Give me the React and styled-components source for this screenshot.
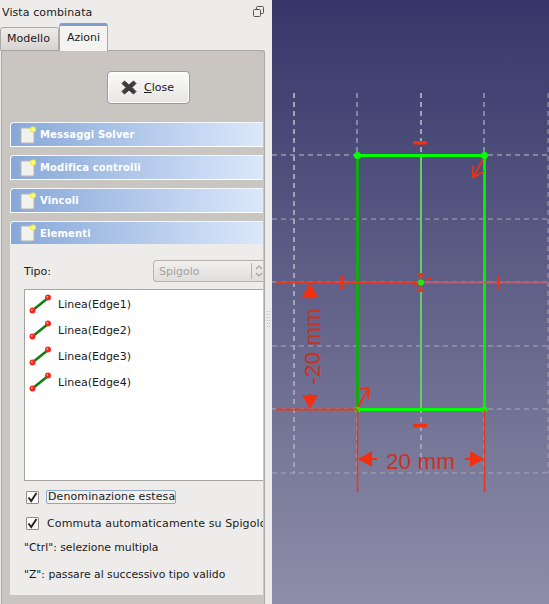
import styled, { createGlobalStyle } from "styled-components";

const GlobalStyle = createGlobalStyle`
  html, body {
    margin: 0;
    padding: 0;
    width: 549px;
    height: 604px;
    overflow: hidden;
    background: #edecea;
  }
  * {
    box-sizing: border-box;
  }
`;

const RED = "#f0300f";
const GRID_X = [294, 357, 421, 484, 548];
const GRID_Y = [155, 219, 282, 346, 409, 473];
const EDGES = ["Linea(Edge1)", "Linea(Edge2)", "Linea(Edge3)", "Linea(Edge4)"];
const SECTIONS = ["Messaggi Solver", "Modifica controlli", "Vincoli"];

function PanelIcon() {
  return (
    <svg width="16" height="18" viewBox="0 0 16 18">
      <rect x="1" y="2" width="13" height="15" rx="1" fill="#f2f1ec" stroke="#b9b8b2" />
      <circle cx="13" cy="3.5" r="3" fill="#f6f03a" />
      <circle cx="13" cy="3.5" r="1.5" fill="#fdfca0" />
    </svg>
  );
}

function EdgeIcon() {
  return (
    <svg width="22" height="20" viewBox="0 0 22 20">
      <line x1="4" y1="16" x2="19" y2="4" stroke="#0f7f0f" strokeWidth="2.6" />
      <circle cx="3.5" cy="16.5" r="3" fill="#ee2a22" />
      <circle cx="19" cy="3.5" r="3" fill="#ee2a22" />
      <circle cx="18.3" cy="2.8" r="0.9" fill="#ffb0a0" />
      <circle cx="2.8" cy="15.8" r="0.9" fill="#ffb0a0" />
    </svg>
  );
}

function Check() {
  return (
    <svg width="13" height="13" viewBox="0 0 13 13">
      <path d="M2.5 6.5 L5.2 10 L10.5 2" fill="none" stroke="#222" strokeWidth="1.9" />
    </svg>
  );
}

// the sketch is a drawing, coordinates are page x minus 272
function Sketch() {
  const ox = 272;
  return (
    <svg width="277" height="604" viewBox={`${ox} 0 277 604`}>
      <defs>
        <linearGradient id="sky" x1="0" y1="0" x2="0" y2="1">
          <stop offset="0" stopColor="#36366a" />
          <stop offset="1" stopColor="#8e8ea9" />
        </linearGradient>
      </defs>
      <rect x={ox} y="0" width="277" height="604" fill="url(#sky)" />

      {GRID_X.map((x) => (
        <line key={x} x1={x} y1="93" x2={x} y2="473" stroke={x === 357 || x === 484 ? "#c8c8d2" : "#a3a3b6"} strokeWidth={x === 294 || x === 421 ? 2 : 1} strokeDasharray="5 4" />
      ))}
      {GRID_Y.map((y) => (
        <line key={y} x1={ox} y1={y} x2="549" y2={y} stroke={y === 155 ? "#c0c0cc" : "#a8a8b8"} strokeWidth="1" strokeDasharray="5 4" />
      ))}

      <line x1="421" y1="155" x2="421" y2="409" stroke="#66cc66" strokeWidth="2" />
      <line x1="357.5" y1="155" x2="357.5" y2="409" stroke="#14a814" strokeWidth="3" />
      <line x1="484.5" y1="155" x2="484.5" y2="409" stroke="#00f000" strokeWidth="3" />
      <line x1="357" y1="155.5" x2="485" y2="155.5" stroke="#00ff00" strokeWidth="3" />
      <line x1="357" y1="409.5" x2="485" y2="409.5" stroke="#00ff00" strokeWidth="3" />

      <line x1="276" y1="282.5" x2="421" y2="282.5" stroke="#e53a1e" strokeWidth="2" />
      <line x1="421" y1="282.5" x2="548" y2="282.5" stroke="#b8616f" strokeWidth="2" />
      <rect x="340.5" y="276" width="3" height="14" fill={RED} />
      <rect x="497" y="276" width="3" height="14" fill={RED} />
      <rect x="413" y="141" width="14" height="3.5" fill={RED} />
      <rect x="413" y="424" width="14" height="3.5" fill={RED} />

      <circle cx="357.5" cy="155.5" r="3.5" fill="#00ff00" />
      <circle cx="484.5" cy="155.5" r="3.5" fill="#00ff00" />
      <circle cx="357.5" cy="409.5" r="3" fill="#00ff00" />
      <circle cx="484.5" cy="409.5" r="3" fill="#00ff00" />

      <g stroke={RED} strokeWidth="1.8" fill="none">
        <path d="M483 159 L473 178 M473 178 L473 165 M473 178 L484 171" />
        <path d="M358 407 L369 388 M369 388 L360 389 M369 388 L368 399" />
        <path d="M421 275 L421 291 M417 274 L424 274 M417 291 L424 291 M413 286 L418 284 M425 280 L431 278" />
      </g>
      <circle cx="421" cy="282.5" r="3" fill="#00ff00" />
      <circle cx="421" cy="282.5" r="1.2" fill="#9a9a50" />

      <line x1="276" y1="409.5" x2="357" y2="409.5" stroke="#e53a1e" strokeWidth="2" />
      <line x1="357.5" y1="410" x2="357.5" y2="492" stroke="#e53a1e" strokeWidth="1.6" />
      <line x1="484.5" y1="410" x2="484.5" y2="492" stroke="#e53a1e" strokeWidth="1.6" />

      <path d="M310 283 L318 297 L311 297 L311 299 L309 299 L309 297 L302 297 Z" fill={RED} />
      <path d="M310 409 L318 395 L311 395 L311 393 L309 393 L309 395 L302 395 Z" fill={RED} />
      <path d="M358 459 L372 451 L372 458 L377 458 L377 460 L372 460 L372 467 Z" fill={RED} />
      <path d="M484 459 L470 451 L470 458 L465 458 L465 460 L470 460 L470 467 Z" fill={RED} />

      <DimLabel x="420.5" y="469" textAnchor="middle">20 mm</DimLabel>
      <DimLabel x="0" y="0" textAnchor="middle" transform="translate(320 346.5) rotate(-90)">-20 mm</DimLabel>
    </svg>
  );
}

export default function App() {
  return (
    <Page>
      <GlobalStyle />
      <Dock>
        <Main>
          <TitleRow>
            <Title>Vista combinata</Title>
            <FloatButton>
              <svg width="11" height="11" viewBox="0 0 11 11" fill="none" stroke="#555" strokeWidth="1">
                <rect x="3.5" y="0.5" width="7" height="7" rx="1" />
                <rect x="0.5" y="3.5" width="7" height="7" rx="1" fill="#edecea" />
              </svg>
            </FloatButton>
          </TitleRow>
          <TabBar>
            <Tab>Modello</Tab>
            <Tab $active>Azioni</Tab>
          </TabBar>
          <Frame>
            <CloseRow>
              <CloseButton>
                <svg width="16" height="15" viewBox="0 0 16 15">
                  <path d="M3.5 1 L8 5 L12.5 1 L15 3.5 L11 7.5 L15 11.5 L12.5 14 L8 10 L3.5 14 L1 11.5 L5 7.5 L1 3.5 Z" fill="#3c3c3c" stroke="#3c3c3c" strokeLinejoin="round" />
                </svg>
                <span><u>C</u>lose</span>
              </CloseButton>
            </CloseRow>
            {SECTIONS.map((name) => (
              <SectionHeader key={name}>
                <PanelIcon />
                <span>{name}</span>
              </SectionHeader>
            ))}
            <SectionHeader $open>
              <PanelIcon />
              <span>Elementi</span>
            </SectionHeader>
            <SectionBody>
              <TypeRow>
                <span>Tipo:</span>
                <TypeSelect>
                  <SelectValue>Spigolo</SelectValue>
                  <SelectArrows>
                    <svg width="8" height="14" viewBox="0 0 8 14" fill="none" stroke="#a5a4a0" strokeWidth="1.2">
                      <path d="M1 5 L4 2 L7 5 M1 9 L4 12 L7 9" />
                    </svg>
                  </SelectArrows>
                </TypeSelect>
              </TypeRow>
              <EdgeList>
                {EDGES.map((edge) => (
                  <EdgeRow key={edge}>
                    <EdgeIcon />
                    <span>{edge}</span>
                  </EdgeRow>
                ))}
              </EdgeList>
              <CheckRow>
                <CheckBox><Check /></CheckBox>
                <FocusLabel>Denominazione estesa</FocusLabel>
              </CheckRow>
              <CheckRow>
                <CheckBox><Check /></CheckBox>
                <PlainLabel>Commuta automaticamente su Spigolo</PlainLabel>
              </CheckRow>
              <Hint>"Ctrl": selezione multipla</Hint>
              <Hint>"Z": passare al successivo tipo valido</Hint>
            </SectionBody>
          </Frame>
        </Main>
        <Splitter>
          <Grip />
        </Splitter>
      </Dock>
      <Sketch />
    </Page>
  );
}

const Page = styled.div`
  display: flex;
  width: 549px;
  height: 604px;
  overflow: hidden;
  font-family: "DejaVu Sans", sans-serif;
  font-size: 11px;
  color: #1a1a1a;
  svg {
    display: block;
    flex-shrink: 0;
  }
`;

const Dock = styled.div`
  display: flex;
  width: 272px;
  flex-shrink: 0;
  background: #edecea;
`;

const Main = styled.div`
  width: 265px;
  display: flex;
  flex-direction: column;
  padding-left: 1px;
`;

const TitleRow = styled.div`
  height: 23px;
  display: flex;
  align-items: center;
  justify-content: space-between;
  padding: 1px 1px 0 1px;
`;

const Title = styled.span`
  font-size: 11px;
  letter-spacing: 0.1px;
`;

const FloatButton = styled.div`
  margin-top: -1px;
`;

const TabBar = styled.div`
  height: 28px;
  display: flex;
  align-items: flex-end;
  margin-left: -1px;
  position: relative;
  z-index: 1;
  margin-bottom: -1px;
`;

const Tab = styled.div`
  height: ${(p) => (p.$active ? "28px" : "24px")};
  width: ${(p) => (p.$active ? "49px" : "59px")};
  border: 1px solid #aaa9a5;
  border-top: ${(p) => (p.$active ? "3px solid #7e9fcb" : "1px solid #aaa9a5")};
  border-bottom: ${(p) => (p.$active ? "none" : "1px solid #aaa9a5")};
  border-radius: 3px 3px 0 0;
  background: ${(p) => (p.$active ? "#f4f3f2" : "linear-gradient(#edecea, #d6d4d0)")};
  display: flex;
  align-items: center;
  justify-content: center;
  padding-bottom: ${(p) => (p.$active ? "3px" : "2px")};
  padding-right: ${(p) => (p.$active ? "0" : "2px")};
`;

const Frame = styled.div`
  flex: 1;
  min-height: 0;
  overflow: hidden;
  background: #c9c6c2;
  border: 1px solid #a9a8a4;
  border-bottom: none;
  border-radius: 3px 3px 0 0;
  padding: 20px 1px 0 8px;
`;

const CloseRow = styled.div`
  display: flex;
  justify-content: center;
  margin-bottom: 18px;
  padding-left: 24px;
`;

const CloseButton = styled.div`
  width: 83px;
  height: 33px;
  display: flex;
  align-items: center;
  justify-content: center;
  gap: 7px;
  background: linear-gradient(#fbfbfa, #e6e5e3);
  border: 1px solid #9c9b97;
  border-radius: 4px;
  box-shadow: inset 0 0 0 1px #fff;
  padding-right: 2px;
`;

const SectionHeader = styled.div`
  height: ${(p) => (p.$open ? "23px" : "25px")};
  margin-bottom: ${(p) => (p.$open ? "0" : "8px")};
  display: flex;
  align-items: center;
  gap: 4px;
  padding-left: 9px;
  background: linear-gradient(90deg, #88a8d8, #dbe8fb);
  border: 1px solid #f4f7fc;
  border-right: none;
  border-bottom: ${(p) => (p.$open ? "none" : "1px solid #fff")};
  border-radius: 4px 0 0 0;
  color: #fff;
  font-weight: 700;
  font-size: 10px;
  letter-spacing: 0.15px;
  white-space: nowrap;
`;

const SectionBody = styled.div`
  height: 351px;
  background: #edecea;
  padding: 16px 0 0 14px;
  overflow: hidden;
`;

const TypeRow = styled.div`
  display: flex;
  align-items: center;
  justify-content: space-between;
  height: 22px;
  margin-bottom: 7px;
`;

const TypeSelect = styled.div`
  width: 110px;
  height: 22px;
  display: flex;
  align-items: center;
  border: 1px solid #b4b3af;
  border-right: none;
  border-radius: 4px 0 0 4px;
  background: linear-gradient(#f1f0ee, #dfdedb);
  color: #a3a29e;
`;

const SelectValue = styled.span`
  flex: 1;
  padding-left: 5px;
`;

const SelectArrows = styled.span`
  height: 16px;
  width: 12px;
  border-left: 1px solid #b4b3af;
  display: flex;
  align-items: center;
  padding-left: 3px;
`;

const EdgeList = styled.div`
  height: 192px;
  background: #fff;
  border: 1px solid #a5a4a0;
  border-right: none;
  padding: 1px 0 0 4px;
  margin-bottom: 3px;
`;

const EdgeRow = styled.div`
  height: 26px;
  display: flex;
  align-items: center;
  gap: 7px;
`;

const CheckRow = styled.div`
  display: flex;
  align-items: center;
  height: 26px;
  padding-left: 2px;
  gap: 7px;
  white-space: nowrap;
`;

const CheckBox = styled.div`
  width: 13px;
  height: 13px;
  background: #fbfbfa;
  border: 1px solid #8f8e8a;
  border-radius: 1px;
  flex-shrink: 0;
  svg {
    margin: -1px;
  }
`;

const FocusLabel = styled.span`
  border: 1px solid #8ea6c4;
  border-radius: 2px;
  background: #f2f1ef;
  padding: 0 0 0 1px;
  height: 14px;
  line-height: 12px;
  letter-spacing: 0.1px;
`;

const PlainLabel = styled.span`
  margin-left: 1px;
  letter-spacing: 0.12px;
`;

const Hint = styled.div`
  height: 27px;
  line-height: 23px;
  font-size: 10.8px;
`;

const Splitter = styled.div`
  width: 7px;
  display: flex;
  align-items: center;
  justify-content: center;
  padding: 18px 0 0 0;
`;

const Grip = styled.div`
  width: 5px;
  height: 18px;
  margin-top: 16px;
  background-image: radial-gradient(#aaa9a5 0.7px, transparent 0.8px);
  background-size: 2.5px 3px;
`;

const DimLabel = styled.text`
  font-family: "Liberation Sans", Arial, sans-serif;
  font-size: 22.5px;
  fill: #c8321e;
`;
